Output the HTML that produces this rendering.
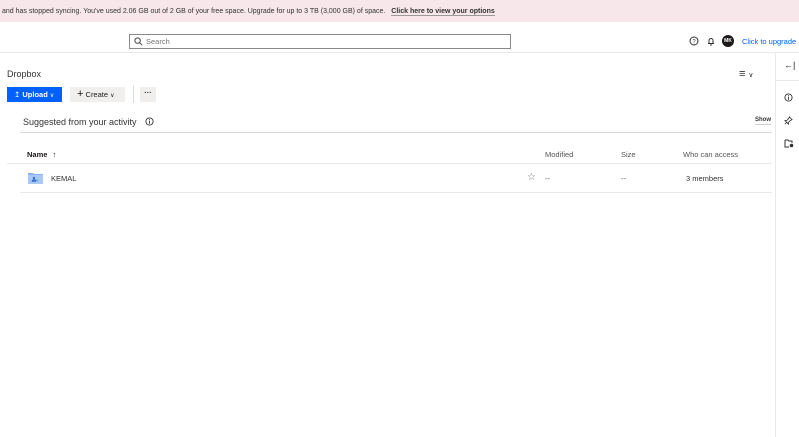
<!DOCTYPE html>
<html><head><meta charset="utf-8"><style>
*{box-sizing:border-box;margin:0;padding:0}
body{width:799px;height:437px;overflow:hidden;background:#fff;font-family:"Liberation Sans",sans-serif;color:#1e1919;position:relative;font-size:8px}
.a{position:absolute;white-space:nowrap}
.banner{left:0;top:0;width:799px;height:22px;background:#f7e6ea;font-size:7px;line-height:24px;padding-left:2px;color:#333;white-space:nowrap}
.banner b{margin-left:4px;border-bottom:1px solid #999;line-height:10px}
.search{left:129px;top:34px;width:382px;height:15px;border:1px solid #888;font-size:7.5px;color:#777;line-height:13px;padding-left:16px}
.hline{height:1px;background:#ebe9e6}
.btn{height:15px;font-size:7.5px;line-height:15px}
</style></head><body>
<div class="a banner">and has stopped syncing. You've used 2.06 GB out of 2 GB of your free space. Upgrade for up to 3 TB (3,000 GB) of space. <b>Click here to view your options</b></div>
<div class="a search"><svg class="a" style="left:4px;top:2px" width="9" height="9" viewBox="0 0 10 10"><circle cx="4" cy="4" r="3" fill="none" stroke="#555" stroke-width="1.2"/><path d="M6.2 6.2L9 9" stroke="#555" stroke-width="1.2"/></svg>Search</div>
<svg class="a" style="left:689px;top:36px" width="10" height="10" viewBox="0 0 10 10"><circle cx="5" cy="5" r="4" fill="none" stroke="#333"/><text x="5" y="7.3" font-size="6" text-anchor="middle" fill="#333" font-family="Liberation Sans">?</text></svg>
<svg class="a" style="left:706px;top:36px" width="10" height="10" viewBox="0 0 10 10"><path d="M2 7.5h6M3 7.5V4.5a2 2 0 014 0v3M4 9h2" fill="none" stroke="#333"/></svg>
<div class="a" style="left:722px;top:35px;width:12px;height:12px;border-radius:50%;background:#1e1919;color:#fff;font-size:5px;line-height:12px;text-align:center;font-weight:bold">MK</div>
<div class="a" style="left:742px;top:37px;font-size:7.5px;color:#0061fe">Click to upgrade</div>
<div class="a hline" style="left:0;top:52px;width:799px"></div>
<div class="a" style="left:775px;top:52px;width:1px;height:385px;background:#ebe9e6"></div>
<div class="a" style="left:784px;top:60px;font-size:9px">&#8592;|</div>
<div class="a hline" style="left:776px;top:80px;width:23px"></div>
<svg class="a" style="left:784px;top:93px" width="9" height="9" viewBox="0 0 10 10"><circle cx="5" cy="5" r="4" fill="none" stroke="#333"/><path d="M5 4v3.5M5 2.5v.8" stroke="#333"/></svg>
<svg class="a" style="left:784px;top:116px" width="9" height="9" viewBox="0 0 10 10"><path d="M6 1l3 3-2 1-2 2 0 2-4-4 2 0 2-2zM1 9l2.5-2.5" fill="none" stroke="#333" stroke-width=".9"/></svg>
<svg class="a" style="left:784px;top:139px" width="10" height="9" viewBox="0 0 10 9"><path d="M1 1h3l1 1h3v2M1 1v7h4" fill="none" stroke="#333"/><circle cx="7.5" cy="6.5" r="1.8" fill="#333"/></svg>
<div class="a" style="left:7px;top:69px;font-size:9px;color:#333">Dropbox</div>
<div class="a" style="left:739px;top:68px;font-size:11px;color:#333">&#8801;<span style="font-size:7px;margin-left:3px">&#8744;</span></div>
<div class="a btn" style="left:7px;top:87px;width:55px;background:#0061fe;color:#fff;padding-left:7px">&#8613; <b>Upload</b> <span style="font-size:6px">&#8744;</span></div>
<div class="a btn" style="left:70px;top:87px;width:55px;background:#f1efed;padding-left:7px"><span style="font-size:11px">+</span> Create <span style="font-size:6px">&#8744;</span></div>
<div class="a" style="left:133px;top:86px;width:1px;height:17px;background:#ddd"></div>
<div class="a btn" style="left:140px;top:87px;width:16px;background:#f1efed;text-align:center;font-weight:bold;line-height:12px">&middot;&middot;&middot;</div>
<div class="a" style="left:23px;top:117px;font-size:9px;color:#333;line-height:10px">Suggested from your activity</div>
<svg class="a" style="left:145px;top:117px" width="9" height="9" viewBox="0 0 10 10"><circle cx="5" cy="5" r="4" fill="none" stroke="#333"/><path d="M5 4v3.5M5 2.5v.8" stroke="#333"/></svg>
<div class="a" style="left:755px;top:117px;font-size:6px;font-weight:bold;color:#333;border-bottom:1px solid #ccc;padding-bottom:1px">Show</div>
<div class="a" style="left:20px;top:132px;width:752px;height:1px;background:#dcdad7"></div>
<div class="a" style="left:27px;top:150px;font-size:7.5px;font-weight:bold">Name <span style="margin-left:3px">&#8593;</span></div>
<div class="a" style="left:545px;top:150px;font-size:7.5px;color:#555">Modified</div>
<div class="a" style="left:621px;top:150px;font-size:7.5px;color:#555">Size</div>
<div class="a" style="left:683px;top:150px;font-size:7.5px;color:#555">Who can access</div>
<div class="a hline" style="left:7px;top:163px;width:765px"></div>
<svg class="a" style="left:28px;top:172px" width="15" height="12" viewBox="0 0 15 12"><path d="M0 1h5l1 1h9v10H0z" fill="#8ab4ef"/><path d="M0 3h15v9H0z" fill="#a9c8f5"/><circle cx="6" cy="6" r="1.2" fill="#3a70c8"/><path d="M4 9.5a2 2 0 014 0zM8.5 7.5l1.5 1.5" stroke="#3a70c8" fill="#3a70c8" stroke-width=".7"/></svg>
<div class="a" style="left:51px;top:174px;font-size:7.5px;color:#333">KEMAL</div>
<div class="a" style="left:527px;top:172px;font-size:10px;color:#777">&#9734;</div>
<div class="a" style="left:545px;top:174px;font-size:7.5px;color:#555">--</div>
<div class="a" style="left:621px;top:174px;font-size:7.5px;color:#555">--</div>
<div class="a" style="left:686px;top:174px;font-size:7.5px;color:#333">3 members</div>
<div class="a hline" style="left:20px;top:192px;width:752px"></div>
</body></html>
